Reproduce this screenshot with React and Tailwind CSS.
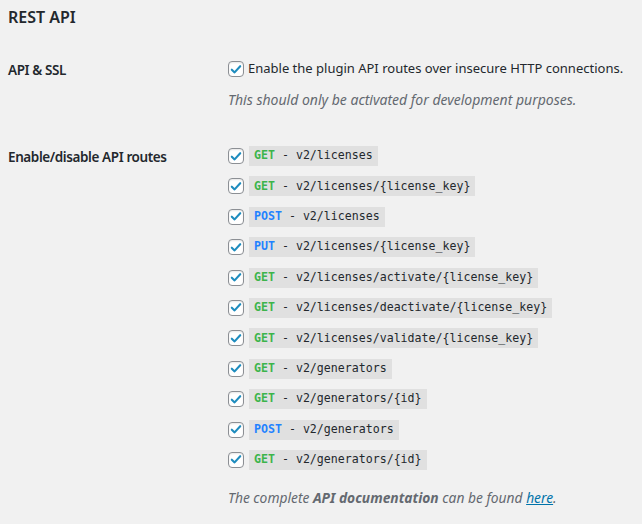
import React, { useState } from 'react';

const routes = [
    { method: 'GET', path: 'v2/licenses' },
    { method: 'GET', path: 'v2/licenses/{license_key}' },
    { method: 'POST', path: 'v2/licenses' },
    { method: 'PUT', path: 'v2/licenses/{license_key}' },
    { method: 'GET', path: 'v2/licenses/activate/{license_key}' },
    { method: 'GET', path: 'v2/licenses/deactivate/{license_key}' },
    { method: 'GET', path: 'v2/licenses/validate/{license_key}' },
    { method: 'GET', path: 'v2/generators' },
    { method: 'GET', path: 'v2/generators/{id}' },
    { method: 'POST', path: 'v2/generators' },
    { method: 'GET', path: 'v2/generators/{id}' },
];

const Checkbox = ({ checked, onChange }) => (
    <button
        type="button"
        onClick={onChange}
        className="w-4 h-4 shrink-0 rounded-[4px] border border-[#8c8f94] bg-white flex items-center justify-center shadow-[inset_0_1px_2px_rgba(0,0,0,0.1)]"
    >
        {checked && (
            <svg viewBox="0 0 16 16" className="w-[15px] h-[15px]">
                <path d="M3.2 8.2 L6.4 11.3 L12.8 4.2" fill="none" stroke="#1e8cbe" strokeWidth="2.4" strokeLinecap="round" strokeLinejoin="round" />
            </svg>
        )}
    </button>
);

const App = () => {
    const [insecure, setInsecure] = useState(true);
    const [enabled, setEnabled] = useState(routes.map(() => true));

    const toggleRoute = (i) => setEnabled(enabled.map((v, j) => (j === i ? !v : v)));

    return (
        <div className="min-h-[524px] bg-[#f1f1f1] text-[#23282d] px-2 pt-[5px] text-[13.5px] font-['Noto_Sans',sans-serif] whitespace-nowrap">
            <h2 className="text-[16px] font-semibold leading-6">REST API</h2>

            <div className="flex mt-[30px]">
                <div className="w-[220px] shrink-0 font-semibold tracking-[-0.4px] leading-5 pt-[1px]">API &amp; SSL</div>
                <div>
                    <label className="flex items-center gap-[4px] h-5 text-[13px]">
                        <Checkbox checked={insecure} onChange={() => setInsecure(!insecure)} />
                        <span>Enable the plugin API routes over insecure HTTP connections.</span>
                    </label>
                    <p className="italic text-[14px] text-[#646970] mt-[11px] leading-5">This should only be activated for development purposes.</p>
                </div>
            </div>

            <div className="flex mt-[36px]">
                <div className="w-[220px] shrink-0 font-semibold tracking-[-0.4px] leading-5 pt-[1px]">Enable/disable API routes</div>
                <div>
                    <div className="flex flex-col gap-[10.4px]">
                        {routes.map((r, i) => (
                            <label key={i} className="flex items-center gap-[5px] h-5">
                                <Checkbox checked={enabled[i]} onChange={() => toggleRoute(i)} />
                                <code className="bg-[#e0e0e0] px-[5px] h-5 flex items-center text-[11.6px] font-['DejaVu_Sans_Mono',monospace]">
                                    <b className={r.method === 'GET' ? 'text-[#3cb44b]' : 'text-[#1f82ff]'}>{r.method}</b>
                                    <span>&nbsp;-&nbsp;{r.path}</span>
                                </code>
                            </label>
                        ))}
                    </div>
                    <p className="italic text-[13.8px] text-[#646970] mt-[18px] leading-5">
                        The complete <b>API documentation</b> can be found <a href="#" className="underline text-[#0073aa]">here</a>.
                    </p>
                </div>
            </div>
        </div>
    );
};

export default App;
